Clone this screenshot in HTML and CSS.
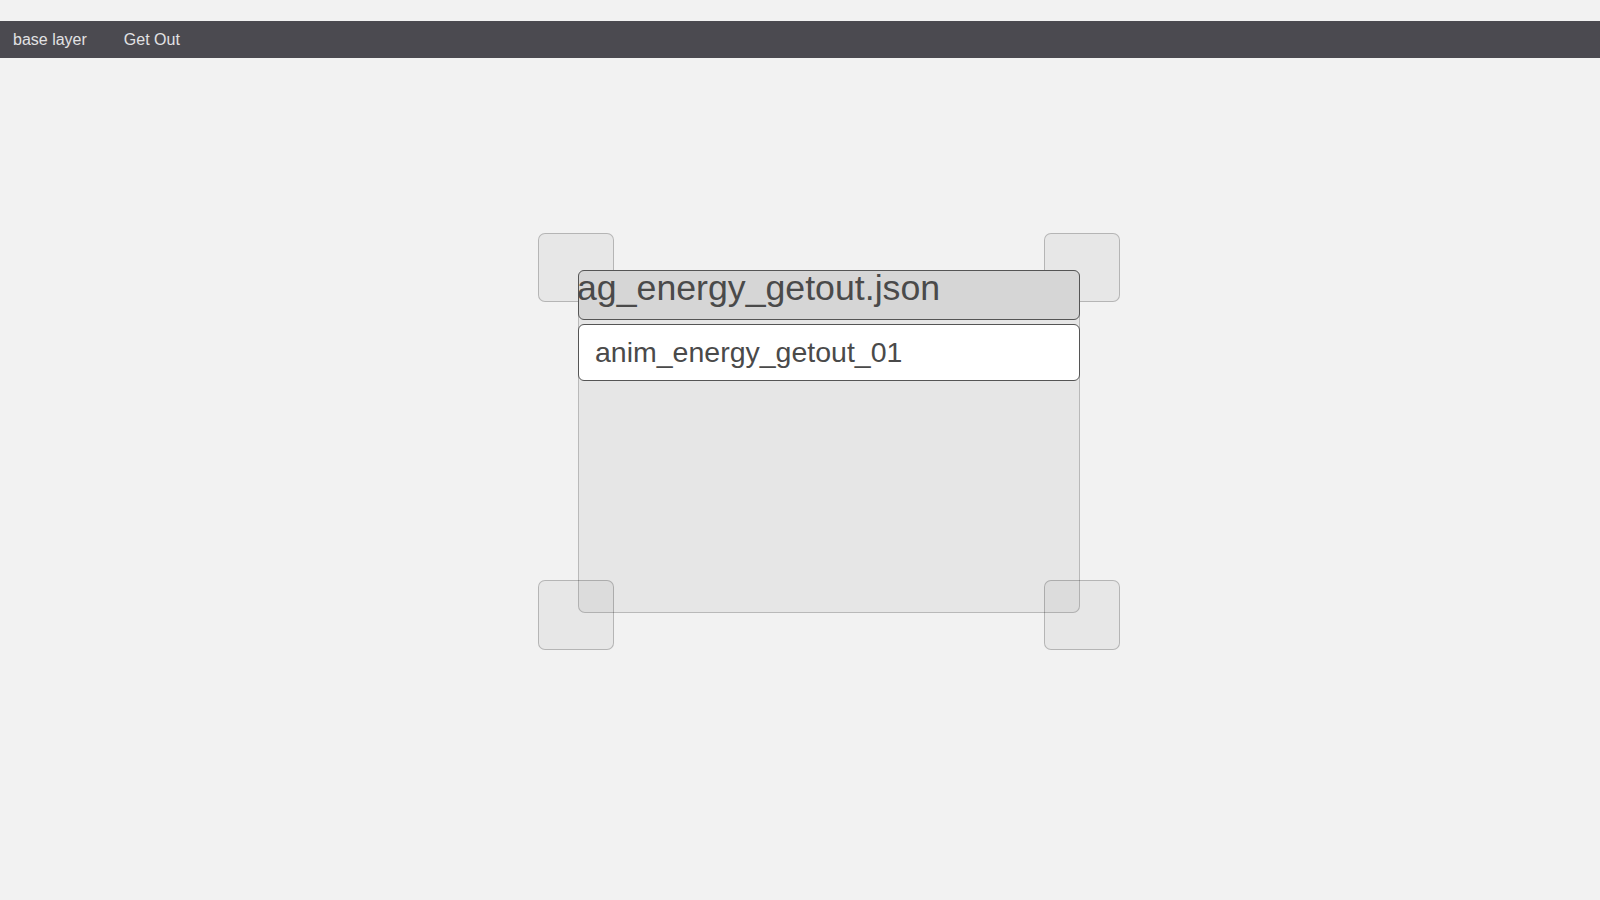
FILE: index.html
```html
<!DOCTYPE html>
<html lang="en">
<head>
<meta charset="utf-8">
<title>base layer</title>
<link rel="stylesheet" href="styles.css">
</head>
<body>
  <nav class="topbar">
    <span class="topbar-item">base layer</span>
    <span class="topbar-item">Get Out</span>
  </nav>
  <main class="stage">
    <div class="node">
      <div class="handle handle-tl"></div>
      <div class="handle handle-tr"></div>
      <div class="handle handle-bl"></div>
      <div class="handle handle-br"></div>
      <div class="node-title">ag_energy_getout.json</div>
      <div class="node-input">anim_energy_getout_01</div>
    </div>
  </main>
</body>
</html>
```

FILE: styles.css
```css
html, body {
  margin: 0;
  padding: 0;
}

body {
  background: #f2f2f2;
  font-family: "Liberation Sans", Arial, sans-serif;
  width: 1600px;
  height: 900px;
  overflow: hidden;
}

.topbar {
  margin-top: 21px;
  height: 37px;
  background: #4b4a50;
  display: flex;
  align-items: center;
  gap: 37px;
  padding-left: 13px;
  box-sizing: border-box;
}

.topbar-item {
  color: #e2e2e4;
  font-size: 16px;
  line-height: 37px;
}

.stage {
  padding-top: 212px;
  padding-left: 578px;
}

.node {
  position: relative;
  width: 502px;
  height: 343px;
  box-sizing: border-box;
  background: rgba(0, 0, 0, 0.048);
  border: 1px solid rgba(0, 0, 0, 0.2);
  border-radius: 7px;
}

.handle {
  position: absolute;
  width: 76px;
  height: 69px;
  box-sizing: border-box;
  background: rgba(0, 0, 0, 0.045);
  border: 1px solid rgba(0, 0, 0, 0.22);
  border-radius: 7px;
  z-index: 1;
}

.handle-tl { left: -41px; top: -38px; }
.handle-tr { left: 465px; top: -38px; }
.handle-bl { left: -41px; top: 309px; height: 70px; }
.handle-br { left: 465px; top: 309px; height: 70px; }

.node-title {
  position: relative;
  z-index: 2;
  margin: -1px -1px 0 -1px;
  height: 50px;
  box-sizing: border-box;
  background: #d6d6d6;
  border: 1px solid #555;
  border-radius: 6px;
  color: #4a4a4a;
  font-size: 35.7px;
  line-height: 34px;
  text-indent: -2px;
  white-space: nowrap;
}

.node-input {
  position: relative;
  z-index: 2;
  margin: 4px -1px 0 -1px;
  height: 57px;
  box-sizing: border-box;
  background: #ffffff;
  border: 1px solid #555;
  border-radius: 6px;
  color: #4a4a4a;
  font-size: 28.5px;
  line-height: 55px;
  padding-left: 16px;
  white-space: nowrap;
}
```
